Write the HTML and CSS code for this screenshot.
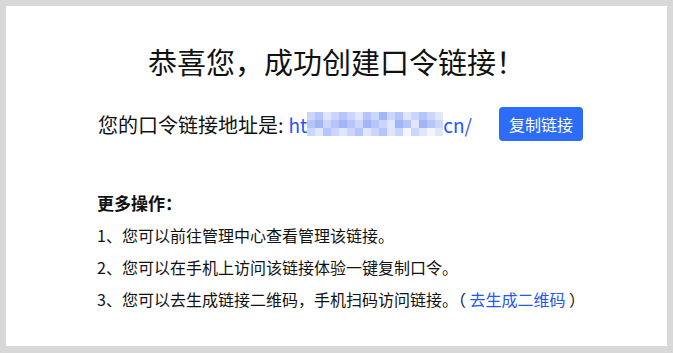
FILE: index.html
```html
<!DOCTYPE html>
<html lang="zh-CN">
<head>
    <meta charset="UTF-8">
    <title>创建成功</title>
    <link rel="stylesheet" href="styles.css">
</head>
<body>
<div class="card">
    <h1 class="title">恭喜您，成功创建口令链接！</h1>
    <div class="link-row">
        <span class="label">您的口令链接地址是:</span>
        <a class="url" href="#">ht<span class="mosaic">
            <i class="c2"></i><i class="c3"></i><i class="c1"></i><i class="c2"></i><i class="c3"></i><i class="c2"></i><i class="c1"></i><i class="c3"></i><i class="c2"></i><i class="c4"></i><i class="c2"></i><i class="c3"></i><i class="c1"></i><i class="c2"></i><i class="c3"></i><i class="c2"></i><i class="c1"></i>
            <i class="c3"></i><i class="c4"></i><i class="c2"></i><i class="c3"></i><i class="c4"></i><i class="c3"></i><i class="c2"></i><i class="c4"></i><i class="c3"></i><i class="c2"></i><i class="c1"></i><i class="c4"></i><i class="c3"></i><i class="c1"></i><i class="c4"></i><i class="c3"></i><i class="c2"></i>
            <i class="c2"></i><i class="c1"></i><i class="c3"></i><i class="c2"></i><i class="c1"></i><i class="c2"></i><i class="c3"></i><i class="c1"></i><i class="c2"></i><i class="c3"></i><i class="c1"></i><i class="c2"></i><i class="c0"></i><i class="c2"></i><i class="c1"></i><i class="c0"></i><i class="c1"></i>
        </span>cn/</a>
        <button class="copy-btn">复制链接</button>
    </div>
    <div class="more">
        <h3 class="more-title">更多操作：</h3>
        <p>1、您可以前往管理中心查看管理该链接。</p>
        <p>2、您可以在手机上访问该链接体验一键复制口令。</p>
        <p>3、您可以去生成链接二维码，手机扫码访问链接。（ <a href="#">去生成二维码</a> ）</p>
    </div>
</div>
</body>
</html>
```

FILE: styles.css
```css
*{
    margin: 0;
    padding: 0;
}
body{
    background: #d8d8d8;
    padding: 6px;
    font-family: "Noto Sans CJK SC", "Noto Sans", sans-serif;
    color: #111;
}
a{
    text-decoration: none;
    color: #2158f0;
}
.card{
    background: #fff;
    height: 340px;
    box-sizing: border-box;
    padding-top: 33px;
}
.title{
    text-align: center;
    font-size: 29px;
    font-weight: 400;
    line-height: 44px;
}
.link-row{
    display: flex;
    align-items: center;
    justify-content: center;
    margin-top: 24px;
    padding-left: 8px;
}
.label{
    font-size: 20px;
}
.url{
    display: flex;
    align-items: center;
    font-size: 19px;
    margin-left: 5px;
}
.mosaic{
    display: grid;
    grid-template-columns: repeat(17, 8px);
    grid-auto-rows: 8px;
}
.mosaic i{
    display: block;
}
.c0{ background: #f4f6fe; }
.c1{ background: #dfe6fd; }
.c2{ background: #cbd6fc; }
.c3{ background: #b5c4fa; }
.c4{ background: #a3b4f8; }
.copy-btn{
    margin-left: 27px;
    width: 84px;
    height: 34px;
    border: none;
    border-radius: 4px;
    background: #2d6cf6;
    color: #fff;
    font-family: inherit;
    font-size: 16px;
    cursor: pointer;
}
.more{
    margin-top: 50px;
    padding-left: 91px;
}
.more-title{
    font-size: 17px;
    font-weight: 700;
    line-height: 24px;
    margin-bottom: 4px;
}
.more p{
    font-size: 16px;
    line-height: 32px;
}
```
